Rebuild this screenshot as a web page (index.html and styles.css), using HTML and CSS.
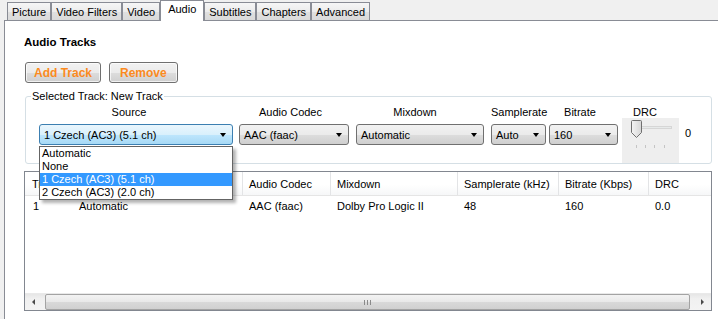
FILE: index.html
```html
<!DOCTYPE html>
<html>
<head>
<meta charset="utf-8">
<link rel="stylesheet" href="styles.css">
</head>
<body>
<div class="tabs">
  <div class="tab">Picture</div>
  <div class="tab">Video Filters</div>
  <div class="tab">Video</div>
  <div class="tab active">Audio</div>
  <div class="tab">Subtitles</div>
  <div class="tab">Chapters</div>
  <div class="tab">Advanced</div>
</div>
<div class="panel">
  <h2 class="title">Audio Tracks</h2>
  <div class="actions">
    <button class="btn btn-add">Add Track</button>
    <button class="btn btn-remove">Remove</button>
  </div>
  <fieldset class="track">
    <legend>Selected Track: New Track</legend>
    <div class="fields">
      <div class="field f-source">
        <div class="lbl">Source</div>
        <div class="combo-wrap">
          <div class="combo focused"><span>1 Czech (AC3) (5.1 ch)</span><i class="arrow"></i></div>
          <ul class="dropdown">
            <li>Automatic</li>
            <li>None</li>
            <li class="sel">1 Czech (AC3) (5.1 ch)</li>
            <li>2 Czech (AC3) (2.0 ch)</li>
          </ul>
        </div>
      </div>
      <div class="field f-codec">
        <div class="lbl">Audio Codec</div>
        <div class="combo"><span>AAC (faac)</span><i class="arrow"></i></div>
      </div>
      <div class="field f-mix">
        <div class="lbl">Mixdown</div>
        <div class="combo"><span>Automatic</span><i class="arrow"></i></div>
      </div>
      <div class="field f-rate">
        <div class="lbl">Samplerate</div>
        <div class="combo"><span>Auto</span><i class="arrow"></i></div>
      </div>
      <div class="field f-bit">
        <div class="lbl">Bitrate</div>
        <div class="combo"><span>160</span><i class="arrow"></i></div>
      </div>
      <div class="field f-drc">
        <div class="lbl">DRC</div>
        <div class="slider">
          <svg width="57" height="45" viewBox="0 0 57 45">
            <defs>
              <linearGradient id="thumbg" x1="0" y1="0" x2="1" y2="0">
                <stop offset="0" stop-color="#f4f4f4"/>
                <stop offset="1" stop-color="#d6d6d6"/>
              </linearGradient>
            </defs>
            <rect x="18.5" y="8.5" width="31" height="2" fill="#e7eaea" stroke="#d6d6d6"/>
            <path d="M9.5 3.5a1 1 0 0 1 1-1h8a1 1 0 0 1 1 1v11l-5 5l-5-5z" fill="url(#thumbg)" stroke="#707070"/>
            <g stroke="#c4c4c4">
              <line x1="14.5" y1="27" x2="14.5" y2="30"/>
              <line x1="23.5" y1="27" x2="23.5" y2="30"/>
              <line x1="32.5" y1="27" x2="32.5" y2="30"/>
              <line x1="42.5" y1="27" x2="42.5" y2="30"/>
            </g>
          </svg>
        </div>
      </div>
      <div class="drc-val">0</div>
    </div>
  </fieldset>
  <div class="list">
    <div class="lrow head">
      <div class="c c-track">Track</div>
      <div class="c"></div>
      <div class="c">Audio Codec</div>
      <div class="c">Mixdown</div>
      <div class="c">Samplerate (kHz)</div>
      <div class="c">Bitrate (Kbps)</div>
      <div class="c c-last">DRC</div>
    </div>
    <div class="lrow data">
      <div class="c c-track">1</div>
      <div class="c">Automatic</div>
      <div class="c">AAC (faac)</div>
      <div class="c">Dolby Pro Logic II</div>
      <div class="c">48</div>
      <div class="c">160</div>
      <div class="c c-last">0.0</div>
    </div>
    <div class="lfill"></div>
    <div class="hscroll">
      <div class="sbtn"><i class="tri-left"></i></div>
      <div class="strack">
        <div class="thumb">
          <svg width="7" height="5" viewBox="0 0 7 5"><g stroke="#8a8a8a"><line x1="0.5" y1="0" x2="0.5" y2="5"/><line x1="3.5" y1="0" x2="3.5" y2="5"/><line x1="6.5" y1="0" x2="6.5" y2="5"/></g></svg>
        </div>
      </div>
      <div class="sbtn"><i class="tri-right"></i></div>
    </div>
  </div>
</div>
</body>
</html>
```

FILE: styles.css
```css
* { box-sizing: border-box; }

body {
  margin: 0;
  width: 718px;
  height: 319px;
  overflow: hidden;
  background: #f0f0f0;
  font: 11px "Liberation Sans", Arial, sans-serif;
  color: #000;
}

/* Tabs */
.tabs {
  display: flex;
  align-items: flex-end;
  height: 20px;
  padding-left: 7px;
  position: relative;
  z-index: 2;
}
.tab {
  height: 18px;
  border: 1px solid #898c95;
  border-bottom: 0;
  padding: 0 4px;
  line-height: 18px;
  white-space: nowrap;
  background: linear-gradient(#f6f6f6, #ececec 50%, #e0e0e0 51%, #dadada);
}
.tab.active {
  height: 21px;
  margin-bottom: -1px;
  background: #fff;
  line-height: 17px;
  padding: 0 7px;
}

/* Panel */
.panel {
  margin-left: 4px;
  height: 299px;
  border-left: 1px solid #898c95;
  border-top: 1px solid #898c95;
  background: #fff;
  padding: 15px 0 0 19px;
  position: relative;
  z-index: 1;
}
.title {
  margin: 0;
  font-size: 11.5px;
  font-weight: bold;
  line-height: 13px;
}
.actions {
  display: flex;
  gap: 8px;
  margin: 13px 0 0 1px;
}
.btn {
  height: 21px;
  border: 1px solid #707070;
  border-radius: 3px;
  background: linear-gradient(#f2f2f2, #ebebeb 50%, #dddddd 51%, #cfcfcf);
  box-shadow: inset 0 0 0 1px rgba(255,255,255,.7);
  font: bold 12px "Liberation Sans", Arial, sans-serif;
  color: #fb8a1e;
  padding: 0 8px;
  line-height: 18px;
}
.btn-remove { padding: 0 10px; }

/* Group box */
.track {
  margin: 7px 0 0 1px;
  width: 687px;
  border: 1px solid #d5dfe5;
  border-radius: 3px;
  padding: 3px 0 0 5px;
  min-inline-size: 0;
}
.track legend {
  padding: 0 1px;
  line-height: 13px;
}
.fields {
  display: flex;
  align-items: flex-start;
  margin-left: 8px;
}
.field {
  display: flex;
  flex-direction: column;
}
.lbl {
  line-height: 13px;
  height: 13px;
  margin-bottom: 5px;
  text-align: center;
  padding-right: 7px;
  white-space: nowrap;
}
.f-source { width: 194px; }
.f-source .lbl { padding-right: 14px; }
.f-codec { width: 110px; margin-left: 6px; }
.f-mix { width: 128px; margin-left: 7px; }
.f-mix .lbl { padding-right: 10px; }
.f-rate { width: 55px; margin-left: 7px; }
.f-rate .lbl { padding-right: 4px; }
.f-bit { width: 69px; margin-left: 3px; }
.f-drc { width: 57px; margin-left: 4px; }
.f-drc .lbl {
  text-align: left;
  padding: 0 0 0 11px;
  height: 12px;
  line-height: 12px;
  margin: 0;
}
.slider {
  width: 57px;
  height: 45px;
  background: #eeeeee;
}
.slider svg { display: block; }
.drc-val {
  margin: 21px 0 0 6px;
  line-height: 13px;
}

/* Combo box */
.combo-wrap { position: relative; }
.combo {
  height: 21px;
  border: 1px solid #707070;
  border-radius: 3px;
  background: linear-gradient(#f2f2f2, #ebebeb 50%, #dddddd 51%, #cfcfcf);
  display: flex;
  align-items: center;
  justify-content: space-between;
  padding: 0 6px 0 4px;
  white-space: nowrap;
  overflow: hidden;
}
.combo.focused {
  border-color: #3c7fb1;
  background: linear-gradient(#eaf6fd, #d9f0fc 50%, #bee6fd 51%, #a7d9f5);
}
.arrow {
  width: 0;
  height: 0;
  border-top: 4px solid #000;
  border-left: 3.5px solid transparent;
  border-right: 3.5px solid transparent;
  flex: none;
}
.dropdown {
  position: absolute;
  left: 0;
  top: 22px;
  width: 100%;
  margin: 0;
  padding: 0;
  list-style: none;
  background: #fff;
  border: 1px solid #646464;
  box-shadow: 3px 3px 3px rgba(0,0,0,.3);
  z-index: 5;
}
.dropdown li {
  line-height: 13px;
  height: 13px;
  padding-left: 2px;
  white-space: nowrap;
}
.dropdown li.sel {
  background: #3399ff;
  color: #fff;
}

/* List view */
.list {
  margin-top: 7px;
  width: 688px;
  height: 140px;
  border: 1px solid #828790;
  display: flex;
  flex-direction: column;
}
.lrow {
  display: grid;
  grid-template-columns: 48px 170px 88px 127px 101px 90px 1fr;
}
.lrow .c {
  padding-left: 6px;
  line-height: 13px;
  white-space: nowrap;
  overflow: hidden;
}
.lrow .c-track { padding-left: 7px; }
.head {
  height: 24px;
  border-bottom: 1px solid #e5e5e5;
  background: linear-gradient(#fff 55%, #f6f7f8);
}
.head .c {
  padding-top: 6px;
  border-right: 1px solid #e3e4e6;
}
.head .c-last { border-right: 0; }
.data {
  height: 20px;
}
.data .c { padding-top: 4px; }
.data .c-track { padding-left: 8px; }
.lfill { flex: 1; }

/* Scrollbar */
.hscroll {
  height: 17px;
  display: flex;
  background: linear-gradient(#e6e6e6, #f0f0f0 30%, #f3f3f3);
  border-top: 1px solid #e9e9e9;
}
.sbtn {
  width: 17px;
  flex: none;
  display: flex;
  align-items: center;
  justify-content: center;
}
.tri-left {
  width: 0; height: 0;
  border-right: 3px solid #4a4a4a;
  border-top: 3.5px solid transparent;
  border-bottom: 3.5px solid transparent;
}
.tri-right {
  width: 0; height: 0;
  border-left: 3px solid #4a4a4a;
  border-top: 3.5px solid transparent;
  border-bottom: 3.5px solid transparent;
}
.strack {
  flex: 1;
  padding: 0 4px 0 3px;
  display: flex;
}
.thumb {
  flex: 1;
  border: 1px solid #a3a3a3;
  border-radius: 2px;
  background: linear-gradient(#f3f3f3, #e8e8e8 50%, #d9d9d9 51%, #d0d0d0);
  display: flex;
  align-items: center;
  justify-content: center;
}
.thumb svg { display: block; }
```
